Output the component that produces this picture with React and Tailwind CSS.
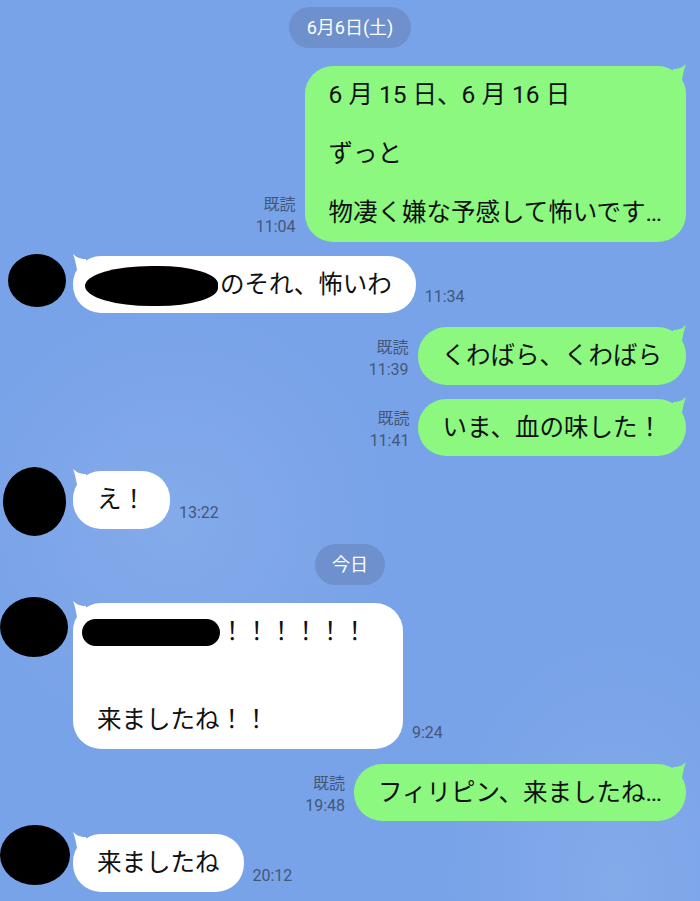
import React from 'react';

function SentTail() {
  return (
    <svg className="absolute -top-[2px] right-0" width="16" height="16" viewBox="0 0 16 16">
      <path d="M16 0 C13 3 9 5 3 5 L3 16 L12 16 C13 10 14 5 16 0 Z" fill="#8cf87f" />
    </svg>
  );
}

function RecvTail() {
  return (
    <svg className="absolute -top-[2px] left-0" width="16" height="16" viewBox="0 0 16 16">
      <path d="M0 0 C3 3 7 5 13 5 L13 16 L4 16 C3 10 2 5 0 0 Z" fill="#ffffff" />
    </svg>
  );
}

function Sent({ time, className, children }) {
  return (
    <div className={`flex items-end justify-end pr-[14px] ${className}`}>
      <div className="mr-[9px] mb-[4px] text-right text-[16px] leading-[22px] text-[#43577a]">
        <div>既読</div>
        <div>{time}</div>
      </div>
      <div className="relative rounded-[28px] bg-[#8cf87f] px-6 py-[14px] text-[24.5px] leading-[29.5px] text-[#111] whitespace-nowrap">
        {children}
        <SentTail />
      </div>
    </div>
  );
}

function Received({ time, avatar, className, bubbleClass = '', children }) {
  return (
    <div className={`flex items-end ${className}`}>
      <div className="h-0 w-[73px] shrink-0 self-start">{avatar}</div>
      <div className={`relative rounded-[28px] bg-white px-6 py-[14px] text-[24.5px] leading-[29.5px] text-[#111] whitespace-nowrap ${bubbleClass}`}>
        {children}
        <RecvTail />
      </div>
      <div className="ml-[9px] mb-[5px] text-[16px] leading-[22px] text-[#43577a]">{time}</div>
    </div>
  );
}

export default function App() {
  return (
    <div className="h-[901px] w-[700px] overflow-hidden bg-[#79a3e8] bg-[radial-gradient(ellipse_at_25%_58%,rgba(255,255,255,0.08),transparent_30%),radial-gradient(ellipse_at_88%_98%,rgba(255,255,255,0.08),transparent_20%)] font-['Roboto','Noto_Sans_CJK_JP',sans-serif]">
      <div className="flex flex-col">
        {/* date */}
        <div className="mx-auto mt-[7px] flex h-[41px] w-[122px] items-center justify-center rounded-full bg-[#6e90cc] text-[18px] text-white">
          6月6日(土)
        </div>

        <Sent time="11:04" className="mt-[18px]">
          <div>6 月 15 日、6 月 16 日</div>
          <div className="h-[29.5px]" />
          <div>ずっと</div>
          <div className="h-[29.5px]" />
          <div>物凄く嫌な予感して怖いです…</div>
        </Sent>

        <Received
          time="11:34"
          className="mt-[14px]"
          avatar={<div className="ml-[8px] -mt-[2px] h-[53px] w-[58px] rounded-[50%] bg-black" />}
        >
          <div className="flex h-[29.5px] items-center">
            <span className="-ml-[12px] mr-[2px] mt-[3px] h-[40px] w-[133px] shrink-0 rounded-[50%_45%_45%_50%] bg-black" />
            のそれ、怖いわ
          </div>
        </Received>

        <Sent time="11:39" className="mt-[14px]">くわばら、くわばら</Sent>
        <Sent time="11:41" className="mt-[14px]">いま、血の味した！</Sent>

        <Received
          time="13:22"
          className="mt-[15px]"
          avatar={<div className="ml-[3px] -mt-[4px] h-[69px] w-[63px] rounded-[50%] bg-black" />}
        >
          え！
        </Received>

        {/* today */}
        <div className="mx-auto mt-[15px] flex h-[41px] w-[70px] items-center justify-center rounded-full bg-[#6e90cc] text-[18px] text-white">
          今日
        </div>

        <Received
          time="9:24"
          className="mt-[18px]"
          bubbleClass="w-[330px]"
          avatar={<div className="-mt-[6px] h-[60px] w-[68px] rounded-[50%] bg-black" />}
        >
          <div className="flex h-[29.5px] items-center">
            <span className="-ml-[15px] mt-[2px] h-[27px] w-[138px] shrink-0 rounded-full bg-black" />
            ！！！！！！
          </div>
          <div className="h-[29.5px]" />
          <div className="h-[29.5px]" />
          <div>来ましたね！！</div>
        </Received>

        <Sent time="19:48" className="mt-[15px]">フィリピン、来ましたね…</Sent>

        <Received
          time="20:12"
          className="mt-[13px]"
          avatar={<div className="-mt-[9px] h-[60px] w-[70px] rounded-[50%] bg-black" />}
        >
          来ましたね
        </Received>
      </div>
    </div>
  );
}
